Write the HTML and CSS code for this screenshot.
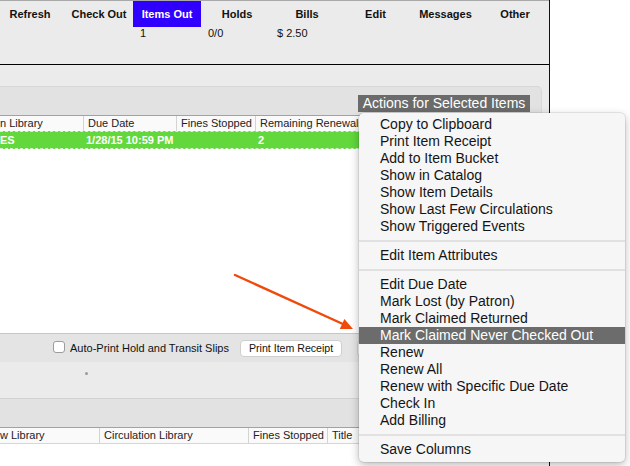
FILE: index.html
```html
<!DOCTYPE html>
<html>
<head>
<meta charset="utf-8">
<link rel="stylesheet" href="styles.css">
</head>
<body>
<div class="page">
  <div class="window">
    <div class="toolbar">
      <div class="tabs">
        <div class="tab tab-first">Refresh</div>
        <div class="tab">Check Out</div>
        <div class="tab active">Items Out</div>
        <div class="tab">Holds</div>
        <div class="tab">Bills</div>
        <div class="tab">Edit</div>
        <div class="tab">Messages</div>
        <div class="tab">Other</div>
      </div>
      <div class="counts">
        <span></span><span></span><span>1</span><span>0/0</span><span class="bills">$ 2.50</span><span></span><span></span><span></span>
      </div>
    </div>
    <div class="spacer"></div>
    <div class="actions-bar">
      <div class="actions-panel">
        <div class="actions-btn">Actions for Selected Items</div>
      </div>
    </div>
    <div class="grid upper">
      <div class="thead">
        <div class="cell first">n Library</div>
        <div class="cell">Due Date</div>
        <div class="cell">Fines Stopped</div>
        <div class="cell last">Remaining Renewals</div>
      </div>
      <div class="row selected">
        <div class="cell first">ES</div>
        <div class="cell">1/28/15 10:59 PM</div>
        <div class="cell"></div>
        <div class="cell last">2</div>
      </div>
    </div>
    <div class="print-bar">
      <span class="checkbox"></span>
      <span class="check-label">Auto-Print Hold and Transit Slips</span>
      <span class="btn">Print Item Receipt</span>
      <span class="btn btn-hidden"></span>
    </div>
    <div class="status"><span class="dot"></span></div>
    <div class="lower-bar"></div>
    <div class="grid lower">
      <div class="thead">
        <div class="cell first">w Library</div>
        <div class="cell">Circulation Library</div>
        <div class="cell">Fines Stopped</div>
        <div class="cell last">Title</div>
      </div>
    </div>
  </div>

  <div class="menu">
    <div class="item">Copy to Clipboard</div>
    <div class="item">Print Item Receipt</div>
    <div class="item">Add to Item Bucket</div>
    <div class="item">Show in Catalog</div>
    <div class="item">Show Item Details</div>
    <div class="item">Show Last Few Circulations</div>
    <div class="item">Show Triggered Events</div>
    <div class="sep"></div>
    <div class="item">Edit Item Attributes</div>
    <div class="sep"></div>
    <div class="item">Edit Due Date</div>
    <div class="item">Mark Lost (by Patron)</div>
    <div class="item">Mark Claimed Returned</div>
    <div class="item hot">Mark Claimed Never Checked Out</div>
    <div class="item">Renew</div>
    <div class="item">Renew All</div>
    <div class="item">Renew with Specific Due Date</div>
    <div class="item">Check In</div>
    <div class="item">Add Billing</div>
    <div class="sep"></div>
    <div class="item">Save Columns</div>
  </div>

  <svg class="arrow" width="630" height="466" viewBox="0 0 630 466">
    <line x1="235" y1="275" x2="344" y2="324.5" stroke="#f0490a" stroke-width="2.4" stroke-linecap="round"/>
    <polygon points="353,329 344.4,319 339.8,329" fill="#f0490a"/>
  </svg>
</div>
</body>
</html>
```

FILE: styles.css
```css
* { box-sizing: border-box; }

html, body {
  margin: 0;
  padding: 0;
  background: #ffffff;
}

body {
  font-family: "Liberation Sans", Arial, Helvetica, sans-serif;
  color: #111;
}

.page {
  position: relative;
  width: 630px;
  height: 466px;
  overflow: hidden;
  background: #ffffff;
}

.window {
  width: 550px;
  height: 466px;
  border-right: 1px solid #111;
  background: #ffffff;
  display: flex;
  flex-direction: column;
}

/* toolbar */
.toolbar {
  height: 65px;
  background: #ebebeb;
  border-top: 1px solid #a9a9a9;
  border-bottom: 1px solid #000;
}

.tabs,
.counts {
  display: grid;
  grid-template-columns: 65px 68px 68px 72px 68px 69px 71px 68px;
}

.tab {
  height: 26px;
  line-height: 26px;
  font-size: 11px;
  font-weight: bold;
  text-align: center;
  color: #111;
}

.tab-first { padding-right: 5px; }

.tab.active {
  background: #3000ff;
  color: #fff;
}

.counts span {
  font-size: 11px;
  line-height: 13px;
  padding-left: 7px;
  color: #111;
}

.counts .bills { padding-left: 4px; }

.spacer {
  height: 21px;
  background: #ebebeb;
}

/* actions */
.actions-bar {
  height: 29px;
  background: #ebebeb;
  padding-right: 7px;
}

.actions-panel {
  height: 29px;
  background: #e2e2e2;
  border-top: 1px solid #d6d6d6;
  border-right: 1px solid #d8d8d8;
  border-top-right-radius: 5px;
  display: flex;
  justify-content: flex-end;
  padding-top: 8px;
  padding-right: 11px;
}

.actions-btn {
  width: 172px;
  height: 17px;
  line-height: 17px;
  background: #6b6b6b;
  color: #fff;
  font-size: 14px;
  text-align: center;
}

/* grids */
.grid .thead,
.grid .row {
  display: grid;
}

.grid.upper .thead,
.grid.upper .row {
  grid-template-columns: 84px 93px 79px 1fr;
}

.grid.lower .thead {
  grid-template-columns: 100px 149px 79px 1fr;
}

.grid.upper {
  height: 218px;
  background: #fff;
}

.thead {
  height: 16px;
  border-top: 1px solid #a2a2a2;
  background: #fafafa;
}

.thead .cell {
  font-size: 11px;
  line-height: 15px;
  padding-left: 4px;
  border-right: 1px solid #d4d4d4;
  white-space: nowrap;
  overflow: hidden;
  color: #222;
}

.thead .cell.first { padding-left: 0; }
.thead .cell.last { border-right: none; }

.row.selected {
  height: 18px;
  background: #62d83c;
  border-top: 1px dashed #d9eed2;
  border-bottom: 1px dashed #d9eed2;
}

.row .cell {
  font-size: 11px;
  line-height: 16px;
  font-weight: bold;
  color: #fff;
  padding-left: 2px;
  white-space: nowrap;
}

.row .cell.first { padding-left: 0; }

/* print bar */
.print-bar {
  height: 29px;
  background: #e4e4e4;
  border-top: 1px solid #c6c6c6;
  display: flex;
  align-items: center;
  padding-left: 53px;
}

.checkbox {
  width: 12px;
  height: 12px;
  border: 1px solid #9c9c9c;
  border-radius: 3px;
  background: #fff;
  margin-top: -2px;
}

.check-label {
  font-size: 11px;
  margin-left: 5px;
  color: #111;
  white-space: nowrap;
}

.btn {
  height: 17px;
  line-height: 15px;
  padding: 0 8px;
  font-size: 10.6px;
  background: #fff;
  border: 1px solid #cfcfcf;
  border-radius: 4px;
  margin-left: 11px;
  white-space: nowrap;
  color: #111;
}

.btn-hidden {
  margin-left: 15px;
  width: 40px;
}

.status {
  height: 37px;
  background: #ebebeb;
  border-bottom: 1px solid #d2d2d2;
  padding-top: 10px;
  padding-left: 85px;
}

.dot {
  display: block;
  width: 3px;
  height: 3px;
  border-radius: 50%;
  background: #9a9a9a;
}

.lower-bar {
  height: 28px;
  background: #e2e2e2;
}

.grid.lower {
  flex: 1;
  background: #fff;
}

.grid.lower .thead {
  border-bottom: 1px solid #d6d6d6;
  height: 17px;
}

/* context menu */
.menu {
  position: absolute;
  left: 359px;
  top: 113px;
  width: 266px;
  height: 349px;
  padding: 3px 0 4px;
  background: #f6f6f6;
  border-radius: 5px;
  box-shadow: 0 0 0 1px rgba(0, 0, 0, 0.07), 0 3px 10px rgba(0, 0, 0, 0.28);
}

.item {
  height: 17px;
  line-height: 17px;
  font-size: 14px;
  padding-left: 21px;
  color: #141414;
  white-space: nowrap;
}

.item.hot {
  background: #6c6c6c;
  color: #fff;
}

.sep {
  height: 12px;
  display: flex;
  align-items: center;
}

.sep::after {
  content: "";
  display: block;
  width: 100%;
  height: 2px;
  background: #e1e1e1;
}

.arrow {
  position: absolute;
  left: 0;
  top: 0;
  pointer-events: none;
}
```
